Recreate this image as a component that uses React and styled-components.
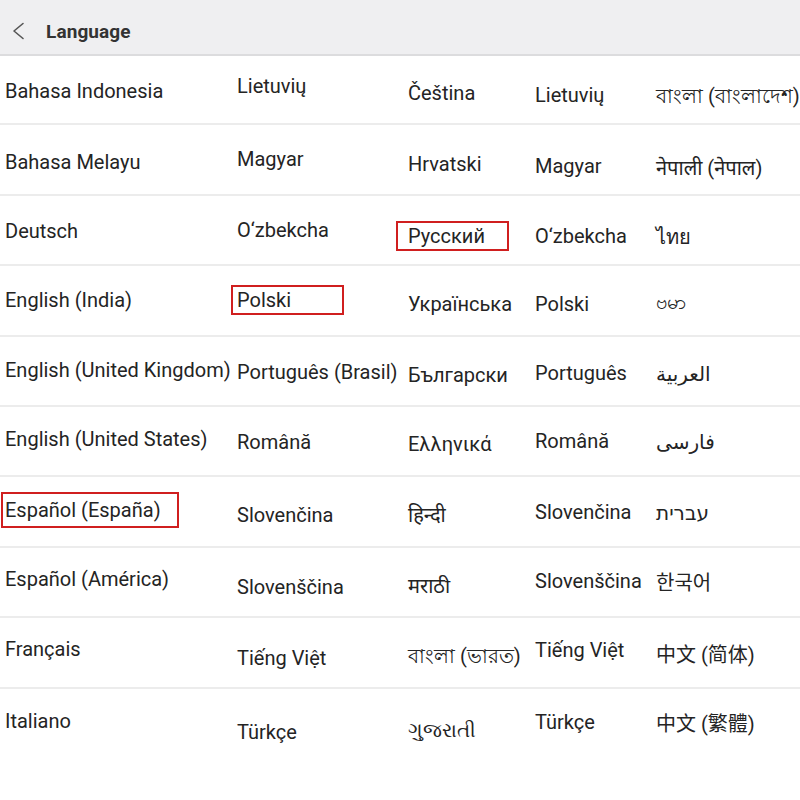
import React from "react";
import styled, { createGlobalStyle } from "styled-components";

const GlobalStyle = createGlobalStyle`
  html, body {
    margin: 0;
    padding: 0;
    background: #ffffff;
  }
  body {
    font-family: Roboto, "Noto Sans", "DejaVu Sans", "Noto Sans CJK SC", sans-serif;
    color: #222222;
  }
`;

// each column: [text, vertical shift px, highlight box]
const columns = [
  [
    ["Bahasa Indonesia", 2],
    ["Bahasa Melayu", 2],
    ["Deutsch", 1],
    ["English (India)", 0],
    ["English (United Kingdom)", -1],
    ["English (United States)", -2],
    ["Español (España)", -2, { left: 4, width: 178, height: 36 }],
    ["Español (América)", -3],
    ["Français", -3],
    ["Italiano", -3],
  ],
  [
    ["Lietuvių", -3],
    ["Magyar", -1],
    ["O‘zbekcha", 0],
    ["Polski", 0, { left: 6, width: 113, height: 30 }],
    ["Português (Brasil)", 1],
    ["Română", 1],
    ["Slovenčina", 3],
    ["Slovenščina", 5],
    ["Tiếng Việt", 6],
    ["Türkçe", 8],
  ],
  [
    ["Čeština", 4],
    ["Hrvatski", 4],
    ["Русский", 6, { left: 12, width: 113, height: 30 }],
    ["Українська", 4],
    ["Български", 4],
    ["Ελληνικά", 3],
    ["हिन्दी", 3],
    ["मराठी", 4],
    ["বাংলা (ভারত)", 5],
    ["ગુજરાતી", 6],
  ],
  [
    ["Lietuvių", 6],
    ["Magyar", 6],
    ["O‘zbekcha", 6],
    ["Polski", 4],
    ["Português", 2],
    ["Română", 0],
    ["Slovenčina", 0],
    ["Slovenščina", -1],
    ["Tiếng Việt", -2],
    ["Türkçe", -2],
  ],
  [
    ["বাংলা (বাংলাদেশ)", 8],
    ["नेपाली (नेपाल)", 8],
    ["ไทย", 7],
    ["ဗမာ", 4],
    ["العربية", 3],
    ["فارسی", 1],
    ["עברית", 1],
    ["한국어", 0],
    ["中文 (简体)", 1],
    ["中文 (繁體)", -1],
  ],
];

function BackIcon() {
  return (
    <svg width="14" height="18" viewBox="0 0 14 18">
      <polyline
        points="11,1.5 2,9 11,16.5"
        fill="none"
        stroke="#555"
        strokeWidth="1.6"
        strokeLinecap="round"
        strokeLinejoin="round"
      />
    </svg>
  );
}

function App() {
  const rows = columns[0].map((_, i) => columns.map((col) => col[i]));
  return (
    <Page>
      <GlobalStyle />
      <Header>
        <BackButton>
          <BackIcon />
        </BackButton>
        <Title>Language</Title>
      </Header>
      <List>
        {rows.map((cells, i) => (
          <Row key={i} $last={i === rows.length - 1}>
            {cells.map(([text, shift, box], j) => (
              <Cell key={j} $shift={shift}>
                {box ? (
                  <Highlight
                    $left={box.left}
                    $width={box.width}
                    $height={box.height}
                  >
                    {text}
                  </Highlight>
                ) : (
                  text
                )}
              </Cell>
            ))}
          </Row>
        ))}
      </List>
    </Page>
  );
}

const Page = styled.div`
  width: 800px;
  height: 800px;
  overflow: hidden;
  background: #fff;
`;

const Header = styled.div`
  height: 56px;
  background: #efeff1;
  border-bottom: 2px solid #dcdcde;
  display: flex;
  align-items: center;
  padding: 8px 0 0 12px;
  box-sizing: border-box;
`;

const BackButton = styled.div`
  width: 34px;
  display: flex;
  align-items: center;
`;

const Title = styled.h1`
  margin: 0;
  font-size: 19px;
  font-weight: 700;
  color: #333;
  letter-spacing: 0.1px;
`;

const List = styled.div`
  display: flex;
  flex-direction: column;
  margin-top: -1px;
`;

const Row = styled.div`
  display: grid;
  grid-template-columns: 232px 171px 127px 121px 1fr;
  align-items: center;
  height: 70.4px;
  box-sizing: border-box;
  padding-left: 5px;
  border-bottom: ${(p) => (p.$last ? "none" : "2px solid #ececec")};
`;

const Cell = styled.div`
  font-size: 20px;
  white-space: nowrap;
  color: #242424;
  transform: translateY(${(p) => p.$shift}px);
`;

const Highlight = styled.span`
  display: inline-flex;
  align-items: center;
  box-sizing: border-box;
  width: ${(p) => p.$width}px;
  height: ${(p) => p.$height}px;
  padding-left: ${(p) => p.$left - 2}px;
  margin-left: -${(p) => p.$left}px;
  border: 2px solid #d01f1f;
`;

export default App;
